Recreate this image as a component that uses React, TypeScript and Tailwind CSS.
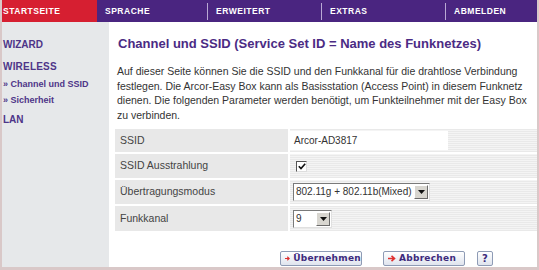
import React from 'react';

const navItems = [
  { label: 'SPRACHE', width: 'w-[110px]' },
  { label: 'ERWEITERT', width: 'w-[114px]' },
  { label: 'EXTRAS', width: 'w-[124px]' },
  { label: 'ABMELDEN', width: 'flex-1' },
];

function Arrow() {
  return (
    <svg width="8" height="7" viewBox="0 0 8 7" className="mr-[3px]">
      <path d="M0 3.5H6M3.5 0.8L6.5 3.5L3.5 6.2" stroke="#e0302f" strokeWidth="1.6" fill="none" />
    </svg>
  );
}

function SelectBox({ value, width }: { value: string; width: string }) {
  return (
    <div className={`flex items-center h-[18px] bg-white border border-t-[#7a7a7a] border-l-[#7a7a7a] border-r-[#e0e0e0] border-b-[#e0e0e0] ${width}`}>
      <span className="flex-1 pl-[2px] text-[10px] text-[#333] leading-none whitespace-nowrap">{value}</span>
      <div className="w-[14px] h-[14px] mr-[1px] bg-[#d8d6d0] border border-t-white border-l-white border-r-[#6a6a6a] border-b-[#6a6a6a] flex items-center justify-center shrink-0">
        <svg width="7" height="4" viewBox="0 0 7 4">
          <path d="M0 0H7L3.5 4Z" fill="#111" />
        </svg>
      </div>
    </div>
  );
}

const cellBg =
  'bg-[repeating-linear-gradient(0deg,#e9e9e9_0px,#e9e9e9_1px,#f4f4f4_1px,#f4f4f4_2px)]';

export default function App() {
  return (
    <div className="w-[539px] h-[270px] bg-[#d9c8c8] pl-[2px] pr-[2px] pb-[3px] flex flex-col font-['Liberation_Sans',Arial,sans-serif] overflow-hidden">
      {/* top navigation */}
      <div className="h-[22px] flex shrink-0 font-bold text-[8.5px] tracking-[0.06em] text-white">
        <div className="w-[95px] shrink-0 bg-[#d61f31] flex items-center pl-[1px]">STARTSEITE</div>
        <div className="flex-1 bg-[#4a2580] flex items-center">
          {navItems.map((item, i) => (
            <div
              key={item.label}
              className={`h-[17px] flex items-center pl-[8px] shrink-0 ${item.width} ${i > 0 ? 'border-l border-[#b9a9d4]' : ''}`}
            >
              {item.label}
            </div>
          ))}
        </div>
      </div>

      <div className="flex flex-1 min-h-0">
        {/* sidebar */}
        <div className="w-[107px] shrink-0 bg-[#e6e8ea] pt-[16px] pl-[1px] text-[#4e3588] font-bold">
          <div className="text-[10px] h-[13px] leading-[13px]">WIZARD</div>
          <div className="text-[10px] h-[13px] leading-[13px] mt-[9px] tracking-[0.02em]">WIRELESS</div>
          <div className="text-[9px] h-[12px] leading-[12px] mt-[5px]">» Channel und SSID</div>
          <div className="text-[9px] h-[12px] leading-[12px] mt-[4px]">» Sicherheit</div>
          <div className="text-[10px] h-[13px] leading-[13px] mt-[7px]">LAN</div>
        </div>

        {/* main */}
        <div className="flex-1 bg-white pl-[6px] pt-[14px] flex flex-col">
          <h1 className="text-[13px] font-bold text-[#4b2b84] leading-[16px] pl-[3px]">
            Channel und SSID (Service Set ID = Name des Funknetzes)
          </h1>
          <p className="mt-[12px] pl-[2px] text-[10.5px] leading-[14.5px] text-[#333] whitespace-nowrap">
            Auf dieser Seite können Sie die SSID und den Funkkanal für die drahtlose Verbindung
            <br />
            festlegen. Die Arcor-Easy Box kann als Basisstation (Access Point) in diesem Funknetz
            <br />
            dienen. Die folgenden Parameter werden benötigt, um Funkteilnehmer mit der Easy Box
            <br />
            zu verbinden.
          </p>

          <div className="mt-[7px] flex flex-col gap-[2px] text-[10.5px] text-[#444]">
            <div className="flex gap-[2px] h-[23px]">
              <div className="w-[173px] bg-[#e8e8e8] flex items-center pl-[5px]">SSID</div>
              <div className={`flex-1 ${cellBg} flex items-center`}>
                <div className="w-[158px] h-[19px] bg-white flex items-center pl-[4px] text-[10px] text-[#333]">Arcor-AD3817</div>
              </div>
            </div>
            <div className="flex gap-[2px] h-[24px]">
              <div className="w-[173px] bg-[#e8e8e8] flex items-center pl-[5px]">SSID Ausstrahlung</div>
              <div className={`flex-1 ${cellBg} flex items-center pl-[6px]`}>
                <div className="w-[11px] h-[11px] bg-white border border-t-[#555] border-l-[#555] border-r-[#ddd] border-b-[#ddd] flex items-center justify-center">
                  <svg width="8" height="7" viewBox="0 0 8 7">
                    <path d="M0.8 3.2L3 5.6L7.2 0.8" stroke="#111" strokeWidth="1.6" fill="none" />
                  </svg>
                </div>
              </div>
            </div>
            <div className="flex gap-[2px] h-[24px]">
              <div className="w-[173px] bg-[#e8e8e8] flex items-center pl-[5px]">Übertragungsmodus</div>
              <div className={`flex-1 ${cellBg} flex items-center pl-[3px]`}>
                <SelectBox value="802.11g + 802.11b(Mixed)" width="w-[137px]" />
              </div>
            </div>
            <div className="flex gap-[2px] h-[25px]">
              <div className="w-[173px] bg-[#e8e8e8] flex items-center pl-[5px]">Funkkanal</div>
              <div className={`flex-1 ${cellBg} flex items-center pl-[3px]`}>
                <SelectBox value="9" width="w-[39px]" />
              </div>
            </div>
          </div>

          {/* buttons */}
          <div className="mt-auto mb-[1px] flex items-center pl-[165px] font-['DejaVu_Sans',Verdana,sans-serif] font-bold text-[9px] text-[#3d2a7c] tracking-[0.03em]">
            <button className="h-[15px] w-[82px] flex items-center pl-[4px] rounded-[2px] border border-[#8e9bb5] bg-[linear-gradient(#ffffff,#dfe4ee)]">
              <Arrow />
              Übernehmen
            </button>
            <button className="ml-[21px] h-[15px] w-[82px] flex items-center pl-[4px] rounded-[2px] border border-[#8e9bb5] bg-[linear-gradient(#ffffff,#dfe4ee)]">
              <Arrow />
              Abbrechen
            </button>
            <button className="ml-[12px] h-[15px] w-[16px] flex items-center justify-center rounded-[2px] border border-[#8e9bb5] bg-[linear-gradient(#ffffff,#dfe4ee)] text-[10px]">
              ?
            </button>
          </div>
        </div>
      </div>
    </div>
  );
}
